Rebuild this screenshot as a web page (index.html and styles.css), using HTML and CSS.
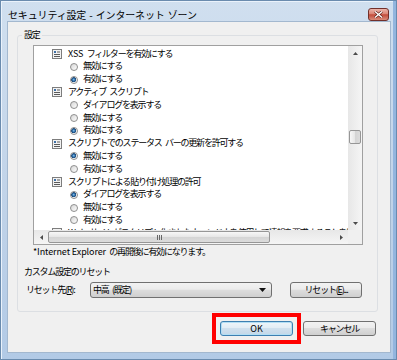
FILE: index.html
```html
<!DOCTYPE html>
<html lang="ja">

<head>
    <meta charset="UTF-8">
    <title>セキュリティ設定 - インターネット ゾーン</title>
    <link rel="stylesheet" href="styles.css">
</head>

<body>
    <div class="window">
        <div class="titlebar">
            <span class="title">セキュリティ設定 - インターネット ゾーン</span>
            <span class="close-btn">
                <svg width="9" height="7" viewBox="0 0 9 7">
                    <path d="M1 0.5L8 6.5M8 0.5L1 6.5" stroke="#5a1a12" stroke-width="2.6" />
                    <path d="M1 0.5L8 6.5M8 0.5L1 6.5" stroke="#fff" stroke-width="1.4" />
                </svg>
            </span>
        </div>

        <div class="client">
            <fieldset class="group">
                <legend>設定</legend>

                <div class="listbox">
                    <div class="list-view">
                        <div class="row head"><svg class="set-icon" viewBox="0 0 10 10"><rect x="0.5" y="0.5" width="9" height="9" fill="#f2f2f2" stroke="#7d7d7d"/><rect x="2" y="2" width="2" height="2" fill="#3d6fa6"/><path d="M5 3h3M2 5.5h6M2 7.5h6" stroke="#5a5a5a"/></svg><span class="latin">XSS</span>&ensp;フィルターを有効にする</div>
                        <div class="row opt"><i class="radio"></i>無効にする</div>
                        <div class="row opt"><i class="radio on"></i>有効にする</div>
                        <div class="row head"><svg class="set-icon" viewBox="0 0 10 10"><rect x="0.5" y="0.5" width="9" height="9" fill="#f2f2f2" stroke="#7d7d7d"/><rect x="2" y="2" width="2" height="2" fill="#3d6fa6"/><path d="M5 3h3M2 5.5h6M2 7.5h6" stroke="#5a5a5a"/></svg>アクティブ&ensp;スクリプト</div>
                        <div class="row opt"><i class="radio"></i>ダイアログを表示する</div>
                        <div class="row opt"><i class="radio"></i>無効にする</div>
                        <div class="row opt"><i class="radio on"></i>有効にする</div>
                        <div class="row head"><svg class="set-icon" viewBox="0 0 10 10"><rect x="0.5" y="0.5" width="9" height="9" fill="#f2f2f2" stroke="#7d7d7d"/><rect x="2" y="2" width="2" height="2" fill="#3d6fa6"/><path d="M5 3h3M2 5.5h6M2 7.5h6" stroke="#5a5a5a"/></svg>スクリプトでのステータス&ensp;バーの更新を許可する</div>
                        <div class="row opt"><i class="radio on"></i>無効にする</div>
                        <div class="row opt"><i class="radio"></i>有効にする</div>
                        <div class="row head"><svg class="set-icon" viewBox="0 0 10 10"><rect x="0.5" y="0.5" width="9" height="9" fill="#f2f2f2" stroke="#7d7d7d"/><rect x="2" y="2" width="2" height="2" fill="#3d6fa6"/><path d="M5 3h3M2 5.5h6M2 7.5h6" stroke="#5a5a5a"/></svg>スクリプトによる貼り付け処理の許可</div>
                        <div class="row opt"><i class="radio on"></i>ダイアログを表示する</div>
                        <div class="row opt"><i class="radio"></i>無効にする</div>
                        <div class="row opt"><i class="radio"></i>有効にする</div>
                        <div class="row head"><svg class="set-icon" viewBox="0 0 10 10"><rect x="0.5" y="0.5" width="9" height="9" fill="#f2f2f2" stroke="#7d7d7d"/><rect x="2" y="2" width="2" height="2" fill="#3d6fa6"/><path d="M5 3h3M2 5.5h6M2 7.5h6" stroke="#5a5a5a"/></svg><span class="latin">Web</span>&ensp;サイトがスクリプト化されたウィンドウを使用して情報を要求することを許可する</div>
                    </div>

                    <!-- scrollbar vertical -->
                    <div class="vscroll">
                        <div class="sb-btn"><svg width="5" height="3"><path d="M0 3L2.5 0L5 3Z" fill="#4a4a4a"/></svg></div>
                        <div class="v-space"></div>
                        <div class="thumb v-thumb"></div>
                        <div class="fill"></div>
                        <div class="sb-btn"><svg width="5" height="3"><path d="M0 0L2.5 3L5 0Z" fill="#4a4a4a"/></svg></div>
                    </div>

                    <!-- scrollbar horizontal -->
                    <div class="hscroll">
                        <div class="sb-btn"><svg width="3" height="5"><path d="M3 0L0 2.5L3 5Z" fill="#4a4a4a"/></svg></div>
                        <div class="thumb h-thumb"><i class="grip"></i></div>
                        <div class="fill"></div>
                        <div class="sb-btn"><svg width="3" height="5"><path d="M0 0L3 2.5L0 5Z" fill="#4a4a4a"/></svg></div>
                    </div>
                    <div class="corner"></div>
                </div>

                <p class="note"><span class="latin">*Internet Explorer</span>&ensp;の再開後に有効になります。</p>

                <div class="reset-title">カスタム設定のリセット</div>
                <div class="reset-row">
                    <span class="reset-label">リセット先(<u>R</u>):</span>
                    <div class="combo">
                        <span>中高&ensp;(既定)</span>
                        <svg width="7" height="4"><path d="M0 0H7L3.5 4Z" fill="#111"/></svg>
                    </div>
                    <button class="btn reset-btn">リセット(<u>E</u>)...</button>
                </div>
            </fieldset>

            <div class="actions">
                <div class="highlight"><button class="btn default"><span class="latin">OK</span></button></div>
                <button class="btn">キャンセル</button>
            </div>
        </div>
    </div>
</body>

</html>
```

FILE: styles.css
```css
body {
    margin: 0;
    font-family: "Noto Sans CJK JP", sans-serif;
    font-size: 9px;
    letter-spacing: -1.2px;
    color: #000;
}

.latin {
    letter-spacing: -0.1px;
}

/* marco de la ventana */
.window {
    width: 397px;
    height: 360px;
    box-sizing: border-box;
    border: 1px solid #6a8bae;
    background: linear-gradient(#d0dfef, #bfd2e8 60%, #b2cae6);
    box-shadow: inset -3px 0 0 #93b5de, inset 1px 1px 0 #eaf2fb;
    display: flex;
    flex-direction: column;
}

.titlebar {
    height: 20px;
    flex: none;
    display: flex;
    justify-content: space-between;
    align-items: flex-start;
    padding: 0 7px;
}

.title {
    font-size: 10px;
    letter-spacing: -0.15px;
    line-height: 12px;
    margin-top: 8px;
    word-spacing: 1px;
}

.close-btn {
    width: 21px;
    height: 13px;
    margin-top: 7px;
    box-sizing: border-box;
    border: 1px solid #72302a;
    border-radius: 3px;
    background: linear-gradient(#ecb5ab, #db8474 45%, #c24b3a 52%, #d98c7a);
    display: flex;
    align-items: center;
    justify-content: center;
}

.client {
    flex: 1;
    margin: 0 5px 6px 6px;
    background: #f0f0f0;
    border: 1px solid #a3b8cf;
    display: flex;
    flex-direction: column;
}

/* grupo "設定" */
.group {
    margin: 7px 12px 0 9px;
    padding: 0 0 13px 0;
    border: 1px solid #dcdfe3;
    border-radius: 3px;
    min-width: 0;
}

.group legend {
    margin-left: 4px;
    padding: 0 2px;
    line-height: 12px;
}

.listbox {
    width: 330px;
    height: 200px;
    box-sizing: border-box;
    margin: 4px 0 0 15px;
    border: 1px solid #a0a0a0;
    background: #fff;
    display: grid;
    grid-template-columns: 1fr 14px;
    grid-template-rows: 1fr 14px;
}

.list-view {
    overflow: hidden;
    padding: 1.6px 0 0 18px;
    white-space: nowrap;
}

.row {
    height: 12.8px;
    line-height: 12.8px;
    display: flex;
    align-items: center;
}

.row.opt {
    padding-left: 18px;
}

.set-icon {
    width: 10px;
    height: 10px;
    flex: none;
    margin-right: 6px;
}

.radio {
    width: 8px;
    height: 8px;
    flex: none;
    box-sizing: border-box;
    margin-right: 5px;
    border: 1px solid #8e8e8e;
    border-radius: 50%;
    background: linear-gradient(135deg, #d6d6d6, #fdfdfd);
}

.radio.on {
    background: radial-gradient(circle at 45% 45%, #8cc8ef 0, #2c6aa6 1.4px, #1b4877 2.3px, #f2f2f2 2.7px, #fafafa 100%);
}

/* barras de desplazamiento */
.vscroll {
    display: flex;
    flex-direction: column;
    background: linear-gradient(to right, #e7e7e7, #f5f5f5);
}

.hscroll {
    display: flex;
    background: linear-gradient(#e7e7e7, #f5f5f5);
}

.sb-btn {
    width: 14px;
    height: 14px;
    flex: none;
    display: flex;
    align-items: center;
    justify-content: center;
}

.v-space {
    height: 70px;
    flex: none;
}

.fill {
    flex: 1;
}

.thumb {
    box-sizing: border-box;
    border: 1px solid #969696;
    border-radius: 2px;
    flex: none;
}

.v-thumb {
    height: 14px;
    margin: 0 1px;
    background: linear-gradient(to right, #f7f7f7, #e6e6e6 50%, #d4d4d4 51%, #dcdcdc);
}

.h-thumb {
    width: 222px;
    margin: 1px 0;
    background: linear-gradient(#f7f7f7, #e6e6e6 50%, #d4d4d4 51%, #dcdcdc);
    display: flex;
    align-items: center;
    justify-content: center;
}

.grip {
    width: 5px;
    height: 5px;
    background: repeating-linear-gradient(to right, #666 0 1px, transparent 1px 2px);
}

.corner {
    background: #f0f0f0;
}

.note {
    margin: 1px 0 0 15px;
    line-height: 12px;
}

.reset-title {
    margin: 8px 0 0 6px;
    line-height: 12px;
}

.reset-row {
    margin-top: 4px;
    height: 16px;
    display: flex;
    align-items: center;
}

.reset-label {
    width: 64px;
    margin-left: 8px;
    line-height: 12px;
}

.combo {
    width: 182px;
    height: 16px;
    box-sizing: border-box;
    border: 1px solid #707070;
    border-radius: 3px;
    padding: 0 5px 0 2px;
    background: linear-gradient(#f2f2f2, #ebebeb 45%, #dddddd 50%, #cfcfcf);
    display: flex;
    align-items: center;
    justify-content: space-between;
    line-height: 12px;
}

/* botones */
.btn {
    width: 73px;
    height: 15px;
    box-sizing: border-box;
    padding: 0;
    border: 1px solid #707070;
    border-radius: 3px;
    background: linear-gradient(#f2f2f2, #ebebeb 45%, #dddddd 50%, #cfcfcf);
    font: inherit;
    letter-spacing: inherit;
    line-height: 12px;
    color: #000;
}

.reset-btn {
    width: 72px;
    height: 16px;
    margin-left: 18px;
}

.btn.default {
    border-color: #3c7fb1;
    box-shadow: inset 0 0 0 1px #b2def4;
    background: linear-gradient(#eef5fa, #e2edf5 45%, #cfe0ee 50%, #c3d7e8);
}

.actions {
    margin-top: 1px;
    padding-right: 14px;
    display: flex;
    justify-content: flex-end;
    align-items: center;
    gap: 2px;
}

.highlight {
    border: 4px solid #ff0000;
    padding: 4px;
    display: flex;
}
```
